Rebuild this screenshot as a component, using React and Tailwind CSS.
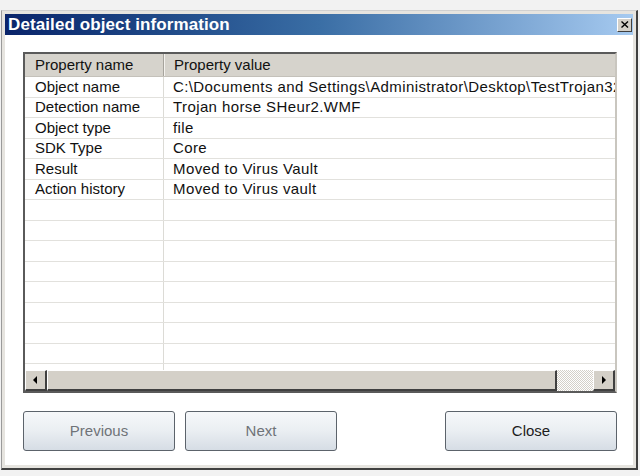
import React from "react";

const rows = [
  ["Object name", "C:\\Documents and Settings\\Administrator\\Desktop\\TestTrojan32.wmf"],
  ["Detection name", "Trojan horse SHeur2.WMF"],
  ["Object type", "file"],
  ["SDK Type", "Core"],
  ["Result", "Moved to Virus Vault"],
  ["Action history", "Moved to Virus vault"],
  ["", ""],
  ["", ""],
  ["", ""],
  ["", ""],
  ["", ""],
  ["", ""],
  ["", ""],
  ["", ""],
  ["", ""],
];

const ArrowButton = ({ dir }) => (
  <div className="w-[22px] h-full flex items-center justify-center bg-[#d4d0c8] border-t border-l border-t-white border-l-white border-r-2 border-b-2 border-r-[#404040] border-b-[#404040]">
    <svg width="5" height="8" viewBox="0 0 5 8">
      {dir === "left" ? (
        <polygon points="4,0 4,8 0,4" fill="#000" />
      ) : (
        <polygon points="1,0 1,8 5,4" fill="#000" />
      )}
    </svg>
  </div>
);

const DialogButton = ({ label, disabled, width }) => (
  <button
    className={
      "h-[40px] rounded-[3px] border border-[#5c636b] bg-gradient-to-b from-[#f6f8fa] via-[#eaeef2] to-[#d6dde5] text-[15px] " +
      width +
      (disabled ? " text-[#6f7378]" : " text-[#1c1c1c]")
    }
  >
    {label}
  </button>
);

export default function App() {
  return (
    <div className="w-[640px] h-[476px] bg-[#f2f2f2] pt-[10px] pl-[1px] font-['Liberation_Sans',Arial,sans-serif]">
      <div className="w-[637px] h-[460px] flex flex-col bg-[#e6e4df] p-[3px] border-t border-l border-t-[#d0d0d0] border-l-[#9a9a9a] border-r-2 border-b-2 border-r-[#404040] border-b-[#404040]">
        {/* title bar */}
        <div className="h-[21px] flex items-center justify-between bg-gradient-to-r from-[#0a246a] via-[#3a6ea5] to-[#a6caf0] pl-[3px] pr-[1px]">
          <span className="text-white font-bold text-[17px] leading-none tracking-[0.1px]">
            Detailed object information
          </span>
          <div className="w-[15px] h-[14px] flex items-center justify-center bg-[#d4d0c8] border-t border-l border-t-white border-l-white border-r border-b border-r-[#404040] border-b-[#404040]">
            <svg width="8" height="7" viewBox="0 0 8 7">
              <path d="M0.5 0.5 L7 6.5 M7 0.5 L0.5 6.5" stroke="#000" strokeWidth="1.4" />
            </svg>
          </div>
        </div>

        {/* body */}
        <div className="flex-1 bg-white pl-[18px] pr-[16px] pt-[17px] flex flex-col">
          <div className="h-[341px] flex flex-col border-2 border-t-[#5a5a5a] border-l-[#5a5a5a] border-r-[#c9c6bf] border-b-[#5a5a5a] text-[15px] text-[#111]">
            {/* header */}
            <div className="h-[23px] flex bg-[#d6d3cc] border-b border-[#c4c1ba]">
              <div className="w-[139px] pl-[10px] flex items-center border-r border-r-[#a6a39c]">
                Property name
              </div>
              <div className="flex-1 pl-[9px] flex items-center border-l border-l-[#f4f2ee]">
                Property value
              </div>
            </div>

            {/* rows */}
            <div className="flex-1 overflow-hidden">
              {rows.map(([name, value], i) => (
                <div key={i} className="h-[20.5px] flex border-b border-[#e2e1dd]">
                  <div className="w-[139px] pl-[10px] flex items-center border-r border-[#dcdbd6] whitespace-nowrap overflow-hidden">
                    {name}
                  </div>
                  <div className="flex-1 pl-[9px] flex items-center whitespace-nowrap overflow-hidden tracking-[0.4px]">
                    {value}
                  </div>
                </div>
              ))}
            </div>

            {/* horizontal scrollbar */}
            <div className="h-[21px] flex">
              <ArrowButton dir="left" />
              <div className="w-[510px] h-full bg-[#d4d0c8] border-t border-l border-t-white border-l-white border-r-2 border-b-2 border-r-[#404040] border-b-[#404040]" />
              <div className="flex-1 h-full bg-[image:repeating-conic-gradient(#d4d0c8_0%_25%,#ffffff_0%_50%)] bg-[length:2px_2px]" />
              <ArrowButton dir="right" />
            </div>
          </div>

          {/* buttons */}
          <div className="mt-[18px] flex">
            <DialogButton label="Previous" disabled width="w-[152px]" />
            <div className="w-[10px]" />
            <DialogButton label="Next" disabled width="w-[152px]" />
            <div className="flex-1" />
            <DialogButton label="Close" width="w-[172px]" />
          </div>
        </div>
      </div>
    </div>
  );
}
